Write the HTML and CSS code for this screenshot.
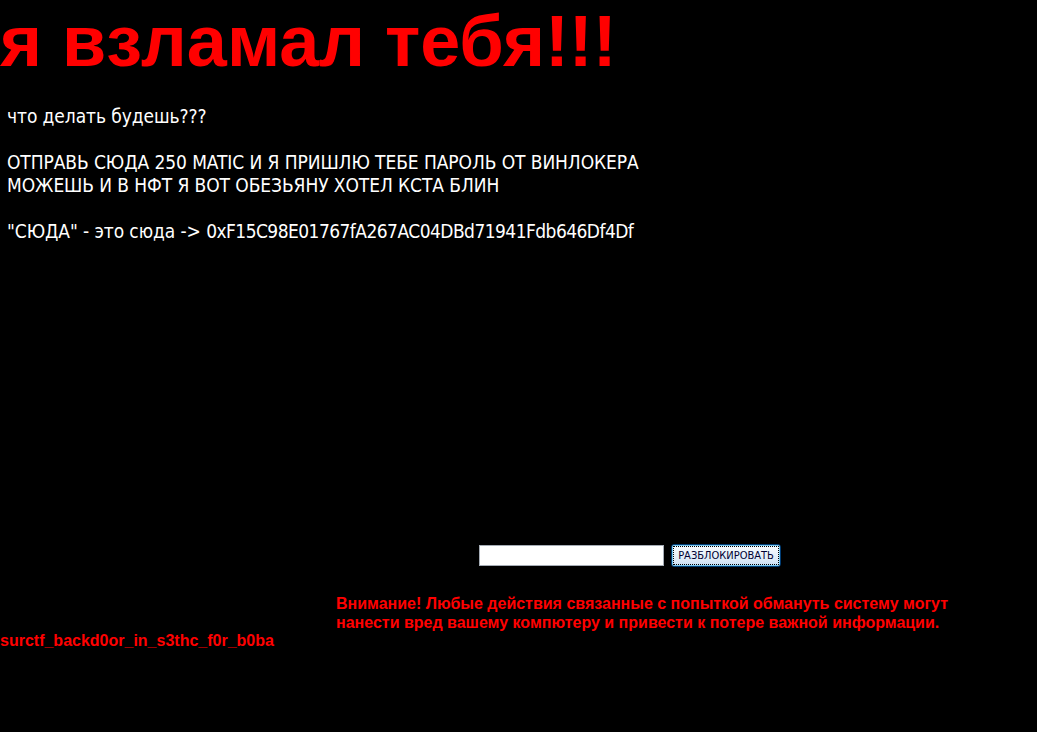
FILE: index.html
```html
<!DOCTYPE html>
<html lang="ru">
<head>
<meta charset="utf-8">
<title>я взламал тебя</title>
<link rel="stylesheet" href="styles.css">
</head>
<body>
<h1 class="title">я взламал тебя!!!</h1>
<div class="message">
  <p class="line">что делать будешь???</p>
  <p class="line blank">&nbsp;</p>
  <p class="line">ОТПРАВЬ СЮДА 250 MATIC И Я ПРИШЛЮ ТЕБЕ ПАРОЛЬ ОТ ВИНЛОКЕРА</p>
  <p class="line">МОЖЕШЬ И В НФТ Я ВОТ ОБЕЗЬЯНУ ХОТЕЛ КСТА БЛИН</p>
  <p class="line blank">&nbsp;</p>
  <p class="line">"СЮДА" - это сюда -&gt; <span class="wallet">0xF15C98E01767fA267AC04DBd71941Fdb646Df4Df</span></p>
</div>
<form class="unlock">
  <input class="code" type="text">
  <button class="btn" type="button"><span class="btn-label">РАЗБЛОКИРОВАТЬ</span></button>
</form>
<p class="warning">Внимание! Любые действия связанные с попыткой обмануть систему могут<br>нанести вред вашему компютеру и привести к потере важной информации.</p>
<p class="flag">surctf_backd0or_in_s3thc_f0r_b0ba</p>
</body>
</html>
```
FILE: styles.css
```css
html, body {
  background: #000;
}
body {
  margin: 0;
  height: 732px;
  overflow: hidden;
}
.title {
  margin: 0;
  color: #ff0000;
  font-family: "Liberation Sans", Arial, sans-serif;
  font-weight: bold;
  font-size: 72px;
  line-height: normal;
  white-space: nowrap;
}
.message {
  margin-top: 23px;
  padding-left: 7px;
  color: #fff;
  font-family: "DejaVu Sans Condensed", "DejaVu Sans", sans-serif;
  font-size: 19px;
  letter-spacing: -0.08px;
  line-height: 23px;
}
.line {
  margin: 0;
  white-space: nowrap;
}
.wallet {
  letter-spacing: -0.55px;
}
.unlock {
  margin: 301px 0 0 0;
  padding-left: 479px;
  display: flex;
  align-items: center;
  gap: 7px;
}
.code {
  box-sizing: border-box;
  width: 185px;
  height: 21px;
  margin: 0;
  border: 1px solid #a5acb5;
  background: #fff;
  padding: 0 2px;
}
.btn {
  box-sizing: border-box;
  width: 110px;
  height: 23px;
  margin: 0;
  padding: 1px;
  border: 1px solid #003c74;
  border-radius: 3px;
  background: linear-gradient(#f7fbfe, #e3eef8 60%, #c9def2);
  box-shadow: inset 0 0 0 1px #7fcbf0;
  font-family: "DejaVu Sans Condensed", "DejaVu Sans", sans-serif;
  font-size: 11px;
  color: #000033;
  cursor: pointer;
}
.btn-label {
  display: flex;
  align-items: center;
  justify-content: center;
  height: 100%;
  border: 1px dotted #000;
  box-sizing: border-box;
}
.warning {
  margin: 27px 0 0 0;
  padding-left: 336px;
  color: #ff0000;
  font-family: "Liberation Sans", Arial, sans-serif;
  font-weight: bold;
  font-size: 16px;
  line-height: 19px;
  white-space: nowrap;
}
.flag {
  margin: 0;
  color: #ff0000;
  font-family: "Liberation Sans", Arial, sans-serif;
  font-weight: bold;
  font-size: 16px;
  line-height: 18px;
}
```
